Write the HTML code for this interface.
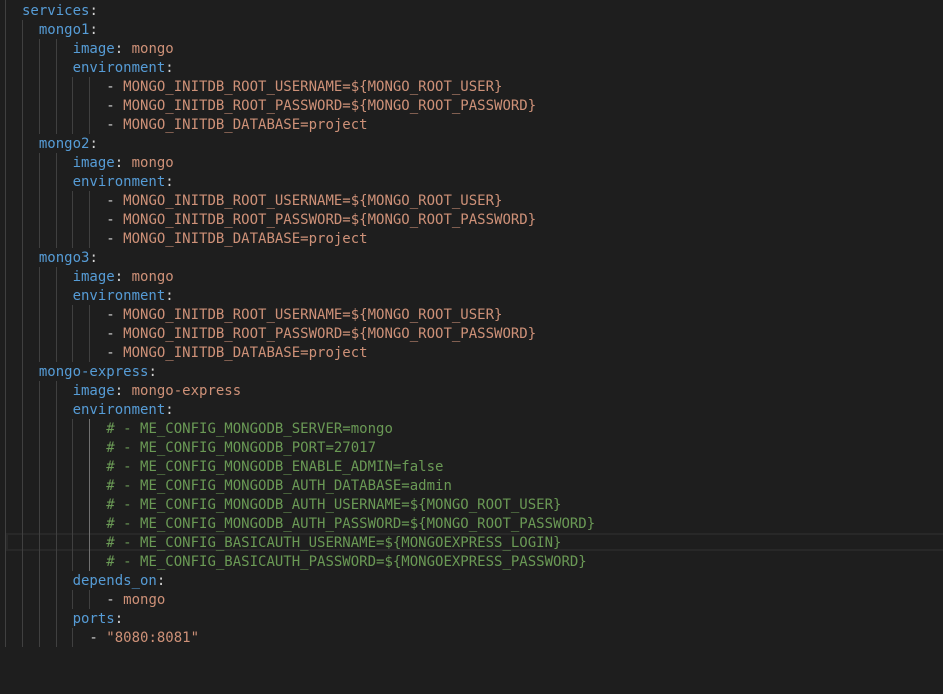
<!DOCTYPE html>
<html><head><meta charset="utf-8">
<style>
html,body{margin:0;padding:0;background:#1e1e1e;width:943px;height:694px;overflow:hidden}
#t{position:absolute;left:22px;top:2px;margin:0;font:14px/19px "DejaVu Sans Mono",monospace;color:#d4d4d4;white-space:pre;z-index:3}
.k{color:#569cd6}.s{color:#ce9178}.c{color:#6a9955}
.g{position:absolute;width:1px;background:#404040;z-index:1}
.a{background:#707070}
#cur{position:absolute;left:6px;top:533px;width:937px;height:14px;border:2px solid #282828;border-right:0;z-index:0}
</style></head><body>
<div id="cur"></div>
<div class="g" style="left:5px;top:0;height:647px"></div>
<div class="g" style="left:22px;top:20px;height:627px"></div>

<div class="g" style="left:39px;top:39px;height:95px"></div>
<div class="g" style="left:56px;top:39px;height:95px"></div>
<div class="g" style="left:39px;top:153px;height:95px"></div>
<div class="g" style="left:56px;top:153px;height:95px"></div>
<div class="g" style="left:39px;top:267px;height:95px"></div>
<div class="g" style="left:56px;top:267px;height:95px"></div>
<div class="g" style="left:39px;top:381px;height:266px"></div>
<div class="g" style="left:56px;top:381px;height:266px"></div>

<div class="g" style="left:72px;top:77px;height:57px"></div>
<div class="g" style="left:89px;top:77px;height:57px"></div>
<div class="g" style="left:72px;top:191px;height:57px"></div>
<div class="g" style="left:89px;top:191px;height:57px"></div>
<div class="g" style="left:72px;top:305px;height:57px"></div>
<div class="g" style="left:89px;top:305px;height:57px"></div>
<div class="g" style="left:72px;top:419px;height:152px"></div>
<div class="g a" style="left:89px;top:419px;height:152px"></div>
<div class="g" style="left:72px;top:590px;height:19px"></div>
<div class="g" style="left:89px;top:590px;height:19px"></div>
<div class="g" style="left:72px;top:628px;height:19px"></div>
<pre id="t"><span class="k">services</span>:
  <span class="k">mongo1</span>:
      <span class="k">image</span>: <span class="s">mongo</span>
      <span class="k">environment</span>:
          - <span class="s">MONGO_INITDB_ROOT_USERNAME=${MONGO_ROOT_USER}</span>
          - <span class="s">MONGO_INITDB_ROOT_PASSWORD=${MONGO_ROOT_PASSWORD}</span>
          - <span class="s">MONGO_INITDB_DATABASE=project</span>
  <span class="k">mongo2</span>:
      <span class="k">image</span>: <span class="s">mongo</span>
      <span class="k">environment</span>:
          - <span class="s">MONGO_INITDB_ROOT_USERNAME=${MONGO_ROOT_USER}</span>
          - <span class="s">MONGO_INITDB_ROOT_PASSWORD=${MONGO_ROOT_PASSWORD}</span>
          - <span class="s">MONGO_INITDB_DATABASE=project</span>
  <span class="k">mongo3</span>:
      <span class="k">image</span>: <span class="s">mongo</span>
      <span class="k">environment</span>:
          - <span class="s">MONGO_INITDB_ROOT_USERNAME=${MONGO_ROOT_USER}</span>
          - <span class="s">MONGO_INITDB_ROOT_PASSWORD=${MONGO_ROOT_PASSWORD}</span>
          - <span class="s">MONGO_INITDB_DATABASE=project</span>
  <span class="k">mongo-express</span>:
      <span class="k">image</span>: <span class="s">mongo-express</span>
      <span class="k">environment</span>:
          <span class="c"># - ME_CONFIG_MONGODB_SERVER=mongo</span>
          <span class="c"># - ME_CONFIG_MONGODB_PORT=27017</span>
          <span class="c"># - ME_CONFIG_MONGODB_ENABLE_ADMIN=false</span>
          <span class="c"># - ME_CONFIG_MONGODB_AUTH_DATABASE=admin</span>
          <span class="c"># - ME_CONFIG_MONGODB_AUTH_USERNAME=${MONGO_ROOT_USER}</span>
          <span class="c"># - ME_CONFIG_MONGODB_AUTH_PASSWORD=${MONGO_ROOT_PASSWORD}</span>
          <span class="c"># - ME_CONFIG_BASICAUTH_USERNAME=${MONGOEXPRESS_LOGIN}</span>
          <span class="c"># - ME_CONFIG_BASICAUTH_PASSWORD=${MONGOEXPRESS_PASSWORD}</span>
      <span class="k">depends_on</span>:
          - <span class="s">mongo</span>
      <span class="k">ports</span>:
        - <span class="s">"8080:8081"</span></pre>
</body></html>
